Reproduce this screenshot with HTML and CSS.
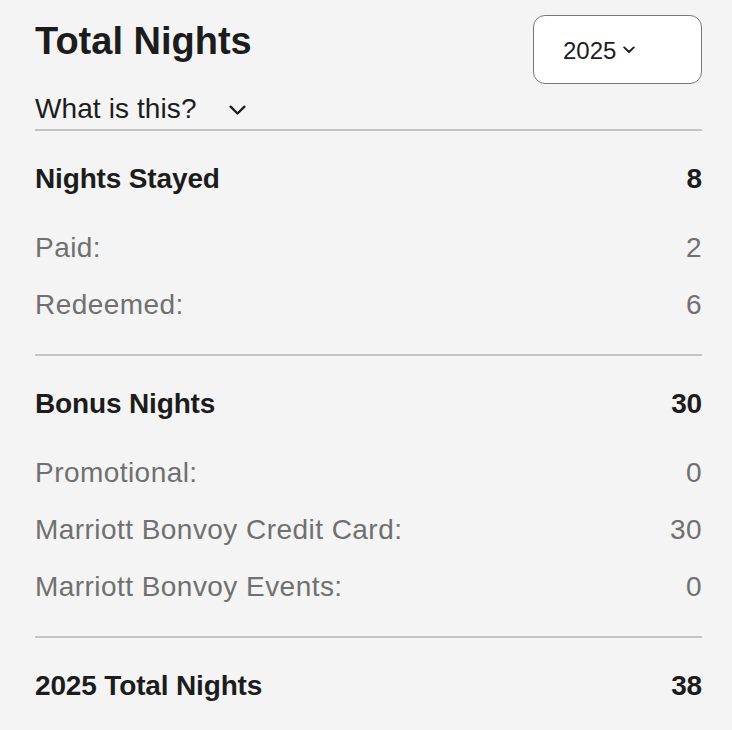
FILE: index.html
```html
<!DOCTYPE html>
<html lang="en">
<head>
<meta charset="utf-8">
<title>Total Nights</title>
<link rel="stylesheet" href="styles.css">
</head>
<body>
<main class="card">
  <header class="header">
    <div class="header-left">
      <h1 class="title">Total Nights</h1>
      <button class="toggle" type="button">
        <span>What is this?</span>
        <svg class="toggle-chev" width="17" height="11" viewBox="0 0 17 11" aria-hidden="true"><polyline points="1.6,1.6 8.5,8.5 15.4,1.6" fill="none" stroke="#1c1c1c" stroke-width="2.3" stroke-linecap="round" stroke-linejoin="round"/></svg>
      </button>
    </div>
    <div class="select">
      <span class="select-text">2025</span>
      <svg class="select-chev" width="12" height="8" viewBox="0 0 12 8" aria-hidden="true"><polyline points="1.2,1.4 6,6 10.8,1.4" fill="none" stroke="#1c1c1c" stroke-width="1.9" stroke-linecap="round" stroke-linejoin="round"/></svg>
    </div>
  </header>

  <section class="section">
    <div class="row head"><span>Nights Stayed</span><span>8</span></div>
    <div class="subs">
      <div class="row sub"><span>Paid:</span><span>2</span></div>
      <div class="row sub"><span>Redeemed:</span><span>6</span></div>
    </div>
  </section>

  <section class="section">
    <div class="row head"><span>Bonus Nights</span><span>30</span></div>
    <div class="subs">
      <div class="row sub"><span>Promotional:</span><span>0</span></div>
      <div class="row sub"><span>Marriott Bonvoy Credit Card:</span><span>30</span></div>
      <div class="row sub"><span>Marriott Bonvoy Events:</span><span>0</span></div>
    </div>
  </section>

  <section class="section total">
    <div class="row head"><span>2025 Total Nights</span><span>38</span></div>
  </section>
</main>
</body>
</html>
```

FILE: styles.css
```css
html, body {
  margin: 0;
  padding: 0;
  background: #f4f4f4;
}

body {
  font-family: "Liberation Sans", Arial, Helvetica, sans-serif;
  color: #1c1c1c;
}

.card {
  padding: 15px 30px 0 35px;
}

.header {
  display: flex;
  justify-content: space-between;
  align-items: flex-start;
  padding-bottom: 4px;
}

.header-left {
  display: flex;
  flex-direction: column;
  align-items: flex-start;
}

.title {
  margin: 4px 0 0 0;
  font-size: 38px;
  line-height: 44px;
  font-weight: 700;
  color: #1c1c1c;
}

.toggle {
  margin-top: 30px;
  padding: 0;
  border: 0;
  background: none;
  display: flex;
  align-items: center;
  font-family: inherit;
  font-size: 28px;
  line-height: 32px;
  letter-spacing: 0.1px;
  color: #1c1c1c;
  cursor: pointer;
}

.toggle-chev {
  margin-left: 32px;
  margin-top: 2px;
}

.select {
  box-sizing: border-box;
  width: 169px;
  height: 69px;
  background: #ffffff;
  border: 1px solid #777777;
  border-radius: 12px;
  display: flex;
  align-items: center;
  padding: 2px 0 0 29px;
}

.select-text {
  font-size: 24px;
  line-height: 28px;
  color: #1c1c1c;
}

.select-chev {
  margin-left: 7px;
  margin-top: -2px;
}

.section {
  border-top: 2px solid #c4c4c4;
  padding: 32px 0 33px 0;
}

.section.total {
  padding-top: 32px;
  padding-bottom: 20px;
}

.row {
  display: flex;
  justify-content: space-between;
  font-size: 28px;
  line-height: 32px;
}

.head {
  font-weight: 700;
  letter-spacing: -0.15px;
  color: #1c1c1c;
}

.subs {
  margin-top: 37px;
  display: flex;
  flex-direction: column;
  gap: 25px;
}

.sub {
  color: #707070;
  letter-spacing: 0.45px;
}
```
